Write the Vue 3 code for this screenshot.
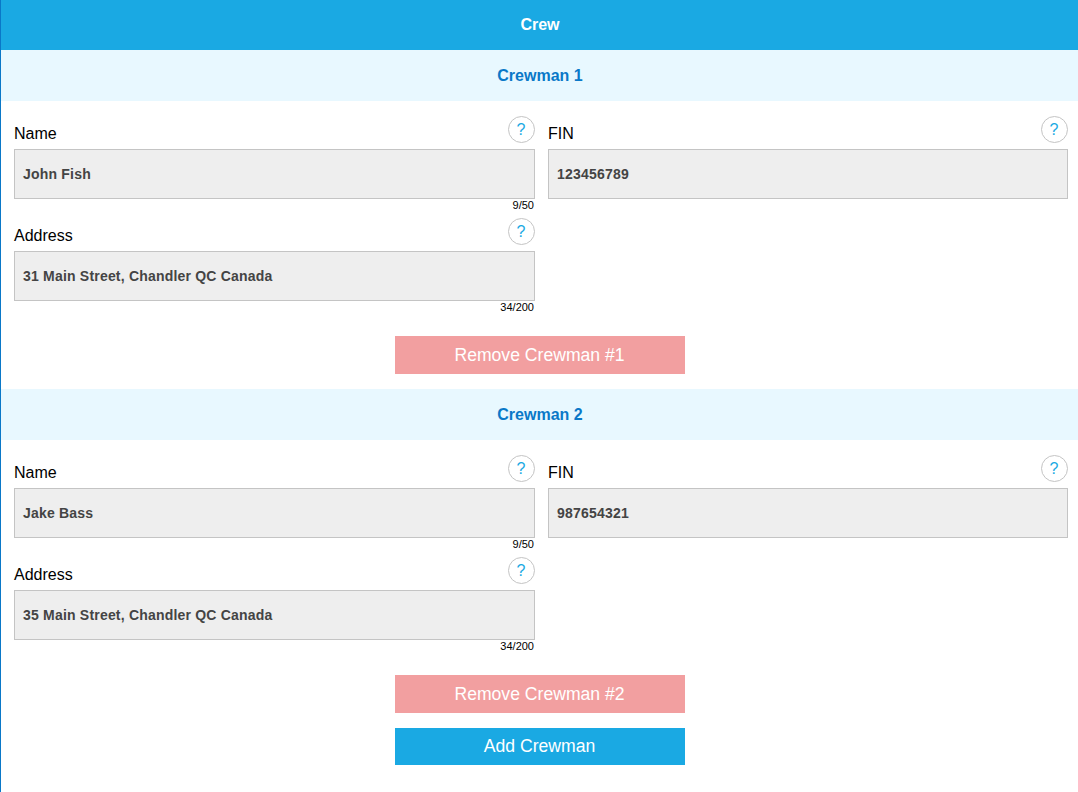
<script setup>
const crew = [
  { n: 1, name: 'John Fish', fin: '123456789', addr: '31 Main Street, Chandler QC Canada' },
  { n: 2, name: 'Jake Bass', fin: '987654321', addr: '35 Main Street, Chandler QC Canada' },
]
</script>

<template>
  <div class="page">
    <header class="top">Crew</header>
    <section v-for="c in crew" :key="c.n">
      <h2 class="sub">Crewman {{ c.n }}</h2>
      <div class="grid">
        <div class="field">
          <div class="label"><span>Name</span><i class="help">?</i></div>
          <div class="input">{{ c.name }}</div>
          <div class="count">{{ c.name.length }}/50</div>
        </div>
        <div class="field">
          <div class="label"><span>FIN</span><i class="help">?</i></div>
          <div class="input">{{ c.fin }}</div>
        </div>
        <div class="field">
          <div class="label"><span>Address</span><i class="help">?</i></div>
          <div class="input">{{ c.addr }}</div>
          <div class="count">{{ c.addr.length }}/200</div>
        </div>
      </div>
      <div class="btn red">Remove Crewman #{{ c.n }}</div>
    </section>
    <div class="btn blue">Add Crewman</div>
  </div>
</template>

<style>
html, body { margin: 0; background: #fff; }
</style>
<style scoped>
.page {
  width: 1078px; height: 792px; box-sizing: border-box; overflow: hidden;
  font-family: "Liberation Sans", Arial, sans-serif; color: #000;
  border-left: 1px solid #0a78c8;
}
.top {
  height: 50px; background: #1aa9e3; color: #fff; font-weight: 700; font-size: 16px;
  display: flex; align-items: center; justify-content: center; padding-left: 1px;
}
.sub {
  margin: 0; height: 51px; background: #e8f8ff; color: #0a78c8; font-size: 16px; font-weight: 700;
  display: flex; align-items: center; justify-content: center; padding-left: 1px;
}
.grid {
  display: grid; grid-template-columns: 521px 520px; column-gap: 13px;
  padding: 15px 0 0 13px; align-items: start;
}
.field { height: 102px; }
.label {
  height: 33px; display: flex; justify-content: space-between; font-size: 16px; line-height: 36px;
}
.help {
  width: 25px; height: 25px; border: 1px solid #c4c4c4; border-radius: 50%;
  color: #1aa9e3; font-style: normal; font-size: 16px; line-height: 26px; text-align: center;
  text-indent: -1px; background: #fff;
}
.input {
  height: 48px; border: 1px solid #c4c4c4; background: #eee; color: #444; font-size: 14px; font-weight: 700;
  line-height: 48px; padding-left: 8px; letter-spacing: .2px;
}
.count { font-size: 11px; line-height: 12px; text-align: right; padding-right: 1px; }
.btn {
  width: 290px; height: 38px; margin: 0 auto; color: #fff; font-size: 17.6px; line-height: 38px; text-align: center;
}
.red { background: #f29fa0; margin-top: 16px; margin-bottom: 15px; }
.blue { background: #1aa9e3; margin-top: 0; height: 37px; line-height: 37px; }
</style>
